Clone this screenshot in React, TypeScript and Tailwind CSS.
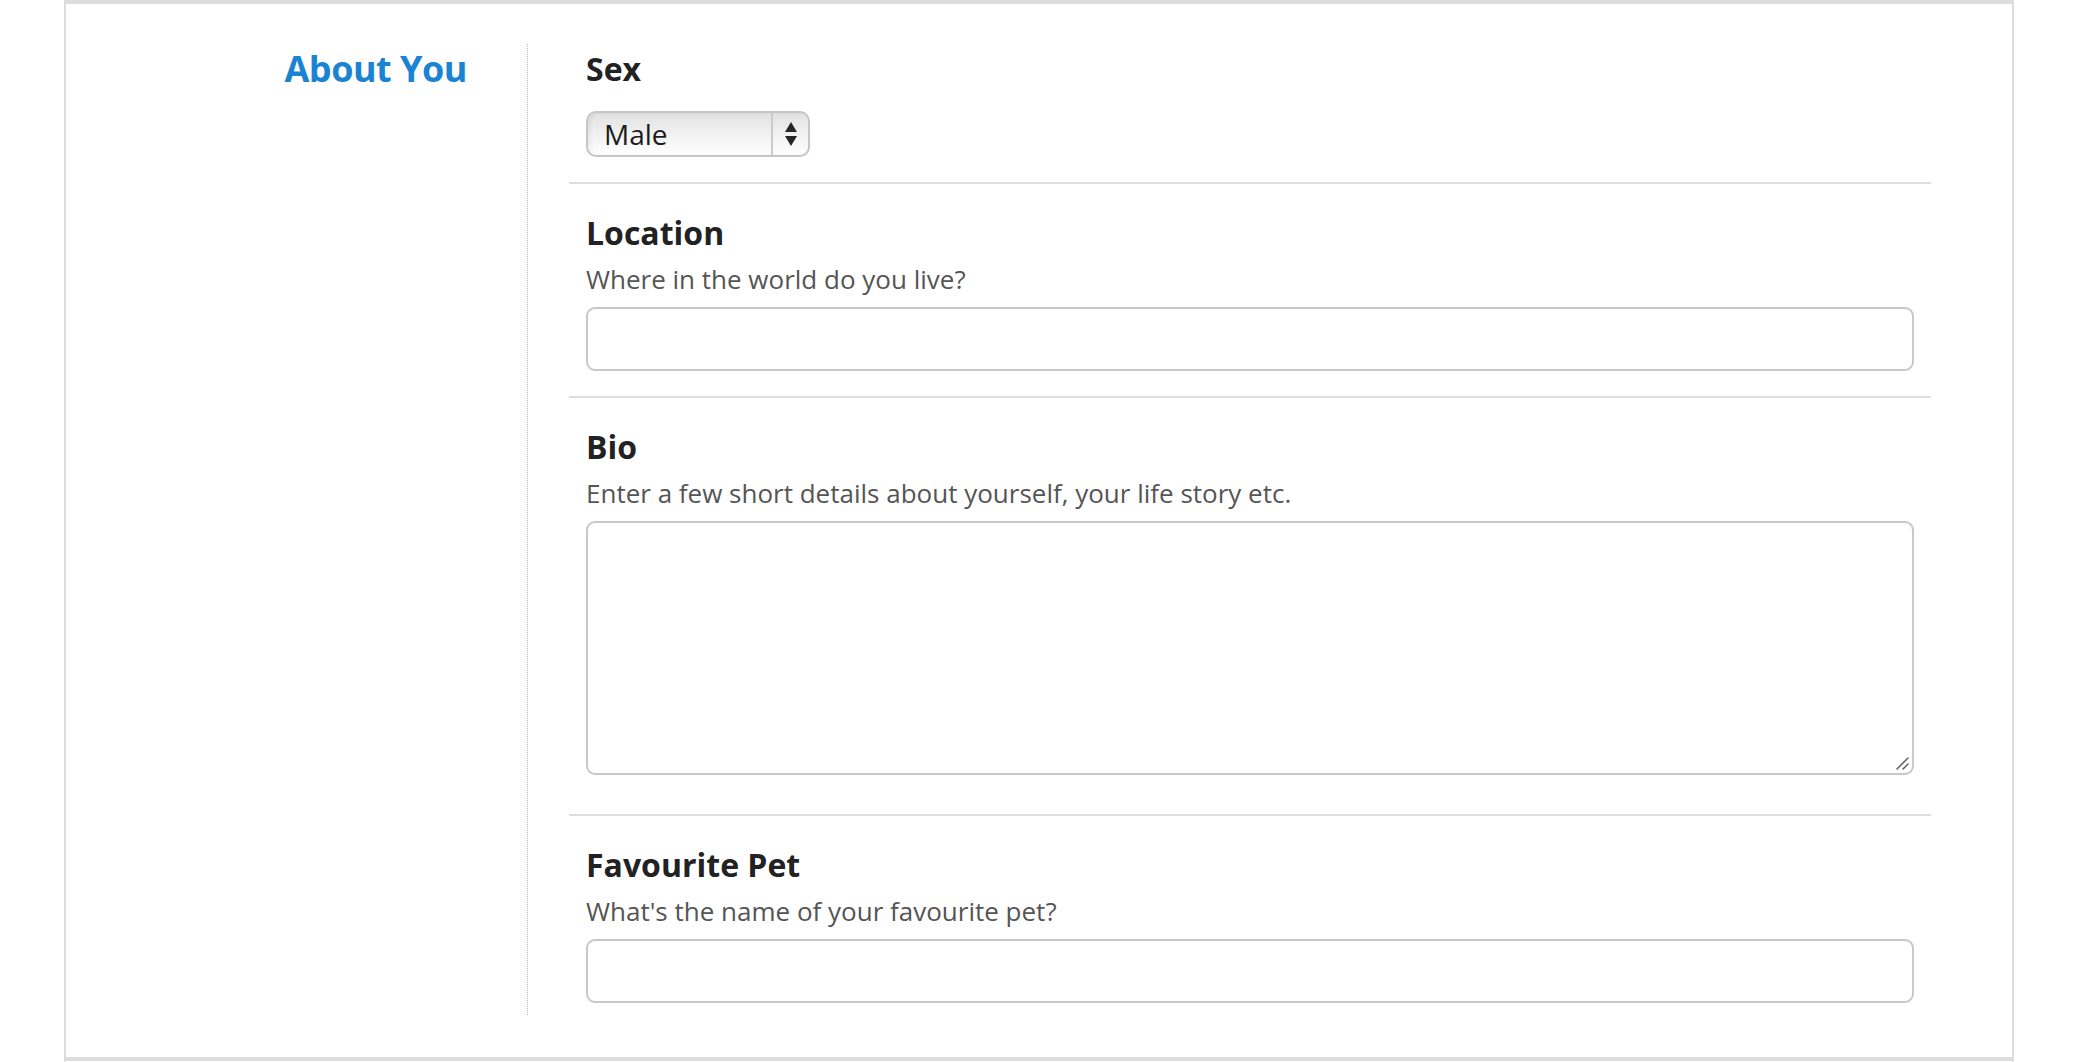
import React from 'react';

const fieldLabel = "block text-[32px] leading-[40px] font-bold text-[#222222]";
const fieldHelp = "block text-[26px] leading-[36px] text-[#555555]";
const boxInput = "block w-full rounded-[9px] border-2 border-[#c8c8c8] bg-white outline-none";

const SelectArrows = () => (
  <svg width="14" height="26" viewBox="0 0 14 26" className="block">
    <path d="M7 1 L13 11 L1 11 Z" fill="#262626" />
    <path d="M1 15 L13 15 L7 25 Z" fill="#262626" />
  </svg>
);

// resize grip drawn over the textarea corner
const Grip = () => (
  <svg width="14" height="14" viewBox="0 0 14 14" className="pointer-events-none absolute right-[5px] bottom-[5px]">
    <line x1="2" y1="13" x2="13" y2="2" stroke="#666666" strokeWidth="1.6" strokeLinecap="round" />
    <line x1="8" y1="13" x2="13" y2="8" stroke="#666666" strokeWidth="1.6" strokeLinecap="round" />
  </svg>
);

const App: React.FC = () => {
  return (
    <div className="min-h-[1062px] bg-white font-['Open_Sans',sans-serif]">
      <div className="ml-[64px] h-[1062px] w-[1950px] overflow-hidden border-x-2 border-t-4 border-[#dddddd] bg-white">
        <div className="flex border-b-4 border-[#dddddd] pt-[40px] pb-[42px]">
          {/* section title */}
          <div className="w-[461px] shrink-0 pr-[60px] pt-[3px] text-right">
            <h2 className="text-[36px] leading-[44px] font-bold tracking-[-0.5px] text-[#1a83d2]">About You</h2>
          </div>

          {/* fields */}
          <div className="flex-1 border-l border-dotted border-[#b8b8b8]">
            <div className="ml-[41px] mr-[81px] px-[17px] pt-[5px] pb-[25px]">
              <label className={fieldLabel}>Sex</label>
              <div className="mt-[22px] flex h-[46px] w-[224px] overflow-hidden rounded-[10px] border-2 border-[#c6c6c6] bg-gradient-to-b from-[#e2e2e2] via-[#f1f1f1] to-[#ffffff] shadow-[inset_3px_0_4px_rgba(0,0,0,0.05)]">
                <div className="flex flex-1 items-center pl-[16px] text-[28px] text-[#1c1c1c]">Male</div>
                <div className="flex w-[37px] items-center justify-center border-l-2 border-[#cbcbcb]">
                  <SelectArrows />
                </div>
              </div>
            </div>

            <div className="ml-[41px] mr-[81px] border-t-2 border-[#dedede] px-[17px] pt-[29px] pb-[25px]">
              <label className={fieldLabel}>Location</label>
              <span className={`${fieldHelp} mt-[8px]`}>Where in the world do you live?</span>
              <input type="text" className={`${boxInput} mt-[10px] h-[64px]`} />
            </div>

            <div className="ml-[41px] mr-[81px] border-t-2 border-[#dedede] px-[17px] pt-[29px] pb-[39px]">
              <label className={fieldLabel}>Bio</label>
              <span className={`${fieldHelp} mt-[8px]`}>Enter a few short details about yourself, your life story etc.</span>
              <div className="relative mt-[10px]">
                <textarea className={`${boxInput} h-[254px] resize-none`} />
                <Grip />
              </div>
            </div>

            <div className="ml-[41px] mr-[81px] border-t-2 border-[#dedede] px-[17px] pt-[29px] pb-[12px]">
              <label className={fieldLabel}>Favourite Pet</label>
              <span className={`${fieldHelp} mt-[8px]`}>What's the name of your favourite pet?</span>
              <input type="text" className={`${boxInput} mt-[10px] h-[64px]`} />
            </div>
          </div>
        </div>
      </div>
    </div>
  );
};

export default App;
